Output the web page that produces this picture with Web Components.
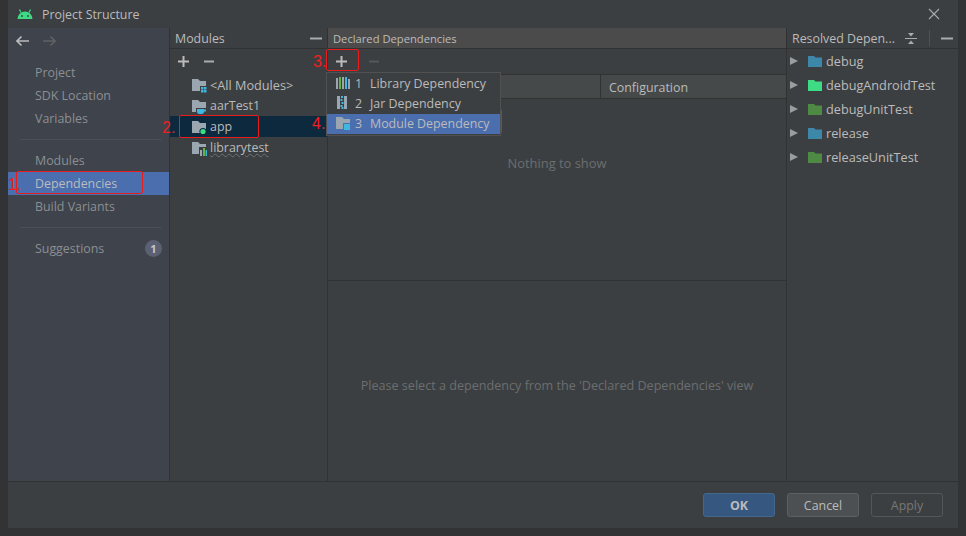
<!DOCTYPE html>
<html>
<head>
<meta charset="utf-8">
<style>
  html, body { margin: 0; height: 100%; background: #313335; overflow: hidden; }
  body { font: 12.4px "Open Sans", "Noto Sans", sans-serif; color: #bbb; }
</style>
</head>
<body>
<ps-dialog></ps-dialog>

<script>
const folder = (extra = '', fill = '#9aa7b0') => `
  <svg width="16" height="16" viewBox="0 0 16 16">
    <path d="M1 2h6l2 2h6v10H1z" fill="${fill}"/>${extra}
  </svg>`;

const icons = {
  all: folder('<path d="M9 9h7v7H9z" fill="#3c3f41"/><path d="M10 10h2.500v2.500H10zM13 10h2.500v2.500H13zM10 13h2.500v2.500H10zM13 13h2.500v2.500H13z" fill="#40b6e0"/>'),
  java: folder('<path d="M5 10h10v6H5z" fill="#3c3f41"/><path d="M6 11h7v2.500a2.500 2.500 0 0 1-2.500 2.500h-2A2.500 2.500 0 0 1 6 13.500zM13 11.500h2v2h-2z" fill="#40b6e0"/>'),
  app: folder('<circle cx="12" cy="12.500" r="3.600" fill="#0d293e"/><circle cx="12" cy="12.500" r="2.600" fill="#3ddc84"/>'),
  lib: folder('<path d="M8 7h8v9H8z" fill="#3c3f41"/><path d="M9 10h2v6H9z" fill="#9aa7b0"/><path d="M12 8h2v8h-2z" fill="#62b543"/><path d="M14.500 10h1.500v6h-1.500z" fill="#40b6e0"/>'),
  module: folder('<path d="M8 8h8v8H8z" fill="#4b6eaf"/><path d="M9 9h6v6H9z" fill="#40b6e0"/>'),
  libMenu: `<svg width="16" height="16" viewBox="0 0 16 16"><path d="M1 3h2v11H1z" fill="#9aa7b0"/><path d="M4 2h2v12H4z" fill="#62b543"/><path d="M7 2h2v12H7z" fill="#9aa7b0"/><path d="M10 2h2v12h-2z" fill="#40b6e0"/><path d="M13 4h2v10h-2z" fill="#9aa7b0"/></svg>`,
  jar: `<svg width="16" height="16" viewBox="0 0 16 16"><path d="M2 1h10v13H2z" fill="#9aa7b0"/><path d="M5 1h4v13H5z" fill="#3c3f41"/><path d="M6 1h2v2H6zM5.500 4h2v2h-2zM6.500 7h2v2h-2zM5.500 10h2v2h-2zM6.500 12h2v2h-2z" fill="#40b6e0"/></svg>`,
  plus: c => `<svg width="11" height="11" viewBox="0 0 11 11"><path d="M4.500 0h2v4.500H11v2H6.500V11h-2V6.500H0v-2h4.500z" fill="${c}"/></svg>`,
  minus: (c, w = 10) => `<svg width="${w}" height="11" viewBox="0 0 ${w} 11"><path d="M0 4.500h${w}v2H0z" fill="${c}"/></svg>`
};

class PsMark extends HTMLElement {
  // red annotation box drawn on top of the screenshot
  constructor() {
    super();
    this.attachShadow({mode: 'open'}).innerHTML = `
      <style>
        :host { position: absolute; display: block; box-sizing: border-box; border: 1px solid #e81c1c; border-radius: 2px; pointer-events: none; }
      </style>`;
  }
}

class PsNote extends HTMLElement {
  constructor() {
    super();
    this.attachShadow({mode: 'open'}).innerHTML = `
      <style>
        :host { position: absolute; display: block; color: #ee2020; font: 16px/18px "Liberation Sans", sans-serif; }
      </style>
      <slot></slot>`;
  }
}

class PsNavItem extends HTMLElement {
  constructor() {
    super();
    this.attachShadow({mode: 'open'}).innerHTML = `
      <style>
        :host { display: flex; align-items: center; height: 23px; padding-left: 27px; padding-right: 7px; color: #8c8f91; }
        :host([selected]) { background: #4b6eaf; color: #bbb; }
        .badge { margin-left: auto; display: none; width: 17px; height: 17px; border-radius: 50%; background: #5c6073; color: #c4c6cc; font-size: 11px; font-weight: 700; line-height: 17px; text-align: center; }
        :host([badge]) .badge { display: block; }
      </style>
      <slot></slot><span class="badge">${this.getAttribute('badge') || ''}</span>`;
  }
}

class PsTreeRow extends HTMLElement {
  constructor() {
    super();
    this.attachShadow({mode: 'open'}).innerHTML = `
      <style>
        :host { display: flex; align-items: center; gap: 3px; height: 21px; padding-left: 21px; color: #bbb; }
        :host([selected]) { background: #0d293e; }
        .i { display: flex; width: 16px; }
      </style>
      <span class="i">${icons[this.getAttribute('icon')]}</span><slot></slot>`;
  }
}

class PsResolved extends HTMLElement {
  constructor() {
    super();
    const c = this.getAttribute('color');
    this.attachShadow({mode: 'open'}).innerHTML = `
      <style>
        :host { display: flex; align-items: center; height: 24px; padding-left: 3px; color: #bbb; font-size: 12.7px; }
        .tri { width: 0; height: 0; border-left: 8px solid #9a9d9f; border-top: 4.500px solid transparent; border-bottom: 4.500px solid transparent; margin-right: 10px; }
        svg { margin-right: 4px; }
      </style>
      <span class="tri"></span>
      <svg width="14" height="12" viewBox="0 0 14 12"><path d="M0 1h6l1.500 1.500H14V12H0z" fill="${c}"/></svg>
      <slot></slot>`;
  }
}

class PsMenuItem extends HTMLElement {
  constructor() {
    super();
    this.attachShadow({mode: 'open'}).innerHTML = `
      <style>
        :host { display: flex; align-items: center; box-sizing: border-box; height: 20px; padding: 0 0 2px 8px; color: #bbb; }
        :host([selected]) { background: #4b6eaf; }
        .i { display: flex; width: 16px; margin-right: 4px; }
        .n { width: 15px; }
      </style>
      <span class="i">${icons[this.getAttribute('icon')]}</span>
      <span class="n">${this.getAttribute('n')}</span><slot></slot>`;
  }
}

class PsButton extends HTMLElement {
  constructor() {
    super();
    this.attachShadow({mode: 'open'}).innerHTML = `
      <style>
        :host { display: flex; align-items: center; justify-content: center; box-sizing: border-box; width: 72px; height: 24px; border: 1px solid #5e6060; border-radius: 3px; background: #4c5052; color: #bbb; }
        :host([primary]) { background: #365880; border-color: #43688c; font-weight: 700; }
        :host([disabled]) { background: transparent; border-color: #54575a; color: #777; }
      </style>
      <slot></slot>`;
  }
}

class PsDialog extends HTMLElement {
  constructor() {
    super();
    this.attachShadow({mode: 'open'}).innerHTML = `
      <style>
        :host { position: relative; display: flex; flex-direction: column; box-sizing: border-box; width: 950px; height: 528px; margin-left: 8px; background: #3c3f41; }
        .title { display: flex; align-items: center; height: 28px; flex: none; padding-left: 9px; gap: 9px; color: #bbb; }
        .close { margin-left: auto; margin-right: 18px; display: flex; }
        .main { display: flex; flex: 1; min-height: 0; }
        .nav { width: 161px; flex: none; background: #3e434c; border-right: 1px solid #323232; }
        .arrows { display: flex; gap: 12px; height: 26px; align-items: center; padding-left: 8px; margin-bottom: 7px; }
        .nav hr { border: 0; border-top: 1px solid #4b4f56; margin: 9px 8px 9px 12px; }
        .modules { width: 157px; flex: none; border-right: 1px solid #323232; }
        .head { display: flex; align-items: center; height: 20px; border-bottom: 1px solid #323232; padding: 0 5px; }
        .head .bar { margin-left: auto; }
        .tools { display: flex; align-items: center; gap: 15px; height: 25px; padding-left: 8px; }
        .declared { position: relative; flex: 1; display: flex; flex-direction: column; border-right: 1px solid #323232; min-width: 0; }
        .declared .head { background: #4b4b4b; font-size: 11.2px; color: #bbb; }
        .declared .tools { gap: 22px; }
        .cols { display: flex; box-sizing: border-box; height: 25px; background: #45494a; border-top: 1px solid #323232; border-bottom: 1px solid #323232; }
        .cols span { margin-left: 272px; padding: 1px 0 0 8px; border-left: 1px solid #323232; display: flex; align-items: center; flex: 1; }
        .upper { height: 182px; display: flex; justify-content: center; padding-top: 55px; box-sizing: border-box; color: #6b6e70; border-bottom: 1px solid #323232; font-size: 12.9px; }
        .lower { flex: 1; display: flex; align-items: center; justify-content: center; color: #6b6e70; padding-top: 9px; font-size: 12.6px; }
        .menu { position: absolute; left: -2px; top: 44px; width: 175px; box-sizing: border-box; border: 1px solid #515151; background: #3c3f41; padding: 1px 0; z-index: 2; }
        .resolved { width: 171px; flex: none; }
        .resolved .head { justify-content: flex-start; }
        .foot { height: 46px; flex: none; border-top: 1px solid #323232; display: flex; align-items: center; justify-content: flex-end; gap: 12px; padding-right: 15px; }
      </style>
      <div class="title">
        <svg width="16" height="16" viewBox="0 0 16 16"><path d="M0.500 13a7.500 7.500 0 0 1 15 0z" fill="#3ddc84"/><path d="M4 6.500 2.500 3.500M12 6.500l1.500-3" stroke="#3ddc84" stroke-width="1.200"/><circle cx="5" cy="10" r=".9" fill="#3c3f41"/><circle cx="11" cy="10" r=".9" fill="#3c3f41"/></svg>
        <span>Project Structure</span>
        <span class="close"><svg width="12" height="12" viewBox="0 0 12 12"><path d="M1 1l10 10M11 1 1 11" stroke="#a9acae" stroke-width="1.100" fill="none"/></svg></span>
      </div>
      <div class="main">
        <div class="nav">
          <div class="arrows">
            <svg width="14" height="12" viewBox="0 0 14 12"><path d="M13 6H1M5.500 1.500 1 6l4.500 4.500" stroke="#bbb" stroke-width="1.600" fill="none"/></svg>
            <svg width="14" height="12" viewBox="0 0 14 12"><path d="M1 6h12M8.500 1.500 13 6l-4.500 4.500" stroke="#5f6264" stroke-width="1.600" fill="none"/></svg>
          </div>
          <ps-nav-item>Project</ps-nav-item>
          <ps-nav-item>SDK Location</ps-nav-item>
          <ps-nav-item>Variables</ps-nav-item>
          <hr>
          <ps-nav-item>Modules</ps-nav-item>
          <ps-nav-item selected>Dependencies</ps-nav-item>
          <ps-nav-item>Build Variants</ps-nav-item>
          <hr>
          <ps-nav-item badge="1">Suggestions</ps-nav-item>
        </div>
        <div class="modules">
          <div class="head"><span>Modules</span><span class="bar" style="display:flex">${icons.minus('#a9acae', 12)}</span></div>
          <div class="tools">${icons.plus('#bbb')}${icons.minus('#a9acae')}</div>
          <div>
            <ps-tree-row icon="all"><span style="font-size:12.7px">&lt;All Modules&gt;</span></ps-tree-row>
            <ps-tree-row icon="java">aarTest1</ps-tree-row>
            <ps-tree-row icon="app" selected>app</ps-tree-row>
            <ps-tree-row icon="lib"><span style="text-decoration: underline wavy #6f7173 1px">librarytest</span></ps-tree-row>
          </div>
        </div>
        <div class="declared">
          <div class="head">Declared Dependencies</div>
          <div class="tools">${icons.plus('#bbb')}${icons.minus('#55585a')}</div>
          <div class="cols"><span>Configuration</span></div>
          <div class="upper">Nothing to show</div>
          <div class="lower">Please select a dependency from the 'Declared Dependencies' view</div>
          <div class="menu">
            <ps-menu-item icon="libMenu" n="1">Library Dependency</ps-menu-item>
            <ps-menu-item icon="jar" n="2">Jar Dependency</ps-menu-item>
            <ps-menu-item icon="module" n="3" selected>Module Dependency</ps-menu-item>
          </div>
        </div>
        <div class="resolved">
          <div class="head">
            <span>Resolved Depen...</span>
            <svg style="margin-left:auto;flex:none" width="12" height="13" viewBox="0 0 12 13"><path d="M0 6h12v1H0zM3 1h6L6 4.500zM3 12h6L6 8.500z" fill="#a9acae"/></svg>
            <span style="flex:none;width:1px;height:16px;background:#515151;margin-left:12px"></span>
            <span style="flex:none;margin-left:11px;display:flex">${icons.minus('#a9acae', 12)}</span>
          </div>
          <div>
            <ps-resolved color="#3d87a8">debug</ps-resolved>
            <ps-resolved color="#3ddc84">debugAndroidTest</ps-resolved>
            <ps-resolved color="#4f8a44">debugUnitTest</ps-resolved>
            <ps-resolved color="#3d87a8">release</ps-resolved>
            <ps-resolved color="#4f8a44">releaseUnitTest</ps-resolved>
          </div>
        </div>
      </div>
      <div class="foot">
        <ps-button primary>OK</ps-button>
        <ps-button>Cancel</ps-button>
        <ps-button disabled>Apply</ps-button>
      </div>
      <ps-mark style="left:8px;top:171px;width:127px;height:23px"></ps-mark>
      <ps-mark style="left:171px;top:115px;width:80px;height:23px"></ps-mark>
      <ps-mark style="left:318px;top:49px;width:33px;height:22px"></ps-mark>
      <ps-mark style="left:319px;top:109px;width:175px;height:25px"></ps-mark>
      <ps-note style="left:0;top:176px">1.</ps-note>
      <ps-note style="left:154px;top:119px">2.</ps-note>
      <ps-note style="left:305px;top:53px">3.</ps-note>
      <ps-note style="left:304px;top:115px">4.</ps-note>`;
  }
}

customElements.define('ps-mark', PsMark);
customElements.define('ps-note', PsNote);
customElements.define('ps-nav-item', PsNavItem);
customElements.define('ps-tree-row', PsTreeRow);
customElements.define('ps-resolved', PsResolved);
customElements.define('ps-menu-item', PsMenuItem);
customElements.define('ps-button', PsButton);
customElements.define('ps-dialog', PsDialog);
</script>
</body>
</html>
